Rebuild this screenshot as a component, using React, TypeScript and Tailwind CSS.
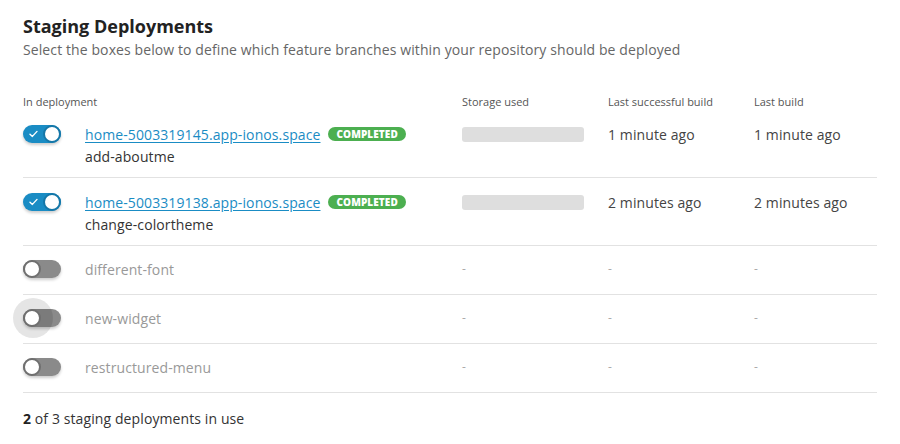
import React from 'react';

type Row = {
    on: boolean;
    url?: string;
    branch: string;
    storage?: boolean;
    lastSuccess: string;
    lastBuild: string;
    focused?: boolean;
};

const ROWS: Row[] = [
    { on: true, url: 'home-5003319145.app-ionos.space', branch: 'add-aboutme', storage: true, lastSuccess: '1 minute ago', lastBuild: '1 minute ago' },
    { on: true, url: 'home-5003319138.app-ionos.space', branch: 'change-colortheme', storage: true, lastSuccess: '2 minutes ago', lastBuild: '2 minutes ago' },
    { on: false, branch: 'different-font', lastSuccess: '-', lastBuild: '-' },
    { on: false, branch: 'new-widget', lastSuccess: '-', lastBuild: '-', focused: true },
    { on: false, branch: 'restructured-menu', lastSuccess: '-', lastBuild: '-' },
];

function Toggle({ on, focused }: { on: boolean; focused?: boolean }) {
    if (on) {
        return (
            <span className="relative inline-flex h-[18px] w-[38px] items-center rounded-full bg-[#1a8cc4] shadow-[0_2px_3px_rgba(0,0,0,0.2)]">
                <svg className="absolute left-[6px] top-[5px]" width="9" height="8" viewBox="0 0 9 8" fill="none">
                    <path d="M1 4.2 L3.4 6.4 L8 1.4" stroke="white" strokeWidth="1.4" strokeLinecap="round" strokeLinejoin="round" />
                </svg>
                <span className="absolute right-0 top-0 h-[18px] w-[18px] rounded-full border-2 border-[#1577a8] bg-white" />
            </span>
        );
    }
    return (
        <span className="relative inline-flex h-[18px] w-[38px] items-center rounded-full bg-[#8a8a8a] shadow-[0_2px_3px_rgba(0,0,0,0.2)]">
            {focused && (
                <span className="absolute -left-[10px] -top-[11px] h-[40px] w-[40px] rounded-full bg-black/10" />
            )}
            <span className="absolute left-0 top-0 h-[18px] w-[18px] rounded-full border-2 border-[#6f6f6f] bg-white" />
        </span>
    );
}

export default function App() {
    return (
        <div className="w-[900px] bg-white px-[23px] pt-[14px] font-['Open_Sans',sans-serif] text-[#333]">
            <h1 className="text-[18px] font-bold leading-6 text-[#222]">Staging Deployments</h1>
            <p className="mt-[2px] text-[14px] leading-5 tracking-[0.1px] text-[#666]">
                Select the boxes below to define which feature branches within your repository should be deployed
            </p>

            <div className="mt-[34px] grid grid-cols-[439px_146px_146px_1fr] text-[11px] leading-4 text-[#555]">
                <span>In deployment</span>
                <span>Storage used</span>
                <span>Last successful build</span>
                <span>Last build</span>
            </div>

            {ROWS.map((row) => (
                <div
                    key={row.branch}
                    className={
                        row.url
                            ? 'grid grid-cols-[439px_146px_146px_1fr] border-b border-[#e2e2e2] pt-3 pb-[10px] text-[14px] tracking-[0.1px]'
                            : 'grid grid-cols-[439px_146px_146px_1fr] border-b border-[#e2e2e2] pt-[11px] pb-[13px] text-[14px] tracking-[0.1px]'
                    }
                >
                    <div className="flex items-start gap-6">
                        <div className="flex h-6 items-center">
                            <Toggle on={row.on} focused={row.focused} />
                        </div>
                        {row.url ? (
                            <div>
                                <div className="flex h-6 items-center gap-2">
                                    <a href="#" className="text-[#1a8cc4] underline underline-offset-2">{row.url}</a>
                                    <span className="rounded-full bg-[#4caf50] px-2 text-[10px] font-extrabold leading-[14px] tracking-[0.1px] text-white">
                                        COMPLETED
                                    </span>
                                </div>
                                <div className="leading-[21px] text-[#333]">{row.branch}</div>
                            </div>
                        ) : (
                            <div className="flex h-6 items-center text-[#999]">{row.branch}</div>
                        )}
                    </div>
                    <div className="flex h-6 items-center">
                        {row.storage ? (
                            <span className="h-[15px] w-[122px] rounded-[3px] bg-[#dedede]" />
                        ) : (
                            <span className="text-[12px] text-[#aaa]">-</span>
                        )}
                    </div>
                    <div className={row.on ? 'flex h-6 items-center text-[#444]' : 'flex h-6 items-center text-[12px] text-[#aaa]'}>
                        {row.lastSuccess}
                    </div>
                    <div className={row.on ? 'flex h-6 items-center text-[#444]' : 'flex h-6 items-center text-[12px] text-[#aaa]'}>
                        {row.lastBuild}
                    </div>
                </div>
            ))}

            <p className="py-4 text-[14px] leading-5 tracking-[0.1px] text-[#333]">
                <b className="font-bold text-[#222]">2</b> of 3 staging deployments in use
            </p>
        </div>
    );
}
